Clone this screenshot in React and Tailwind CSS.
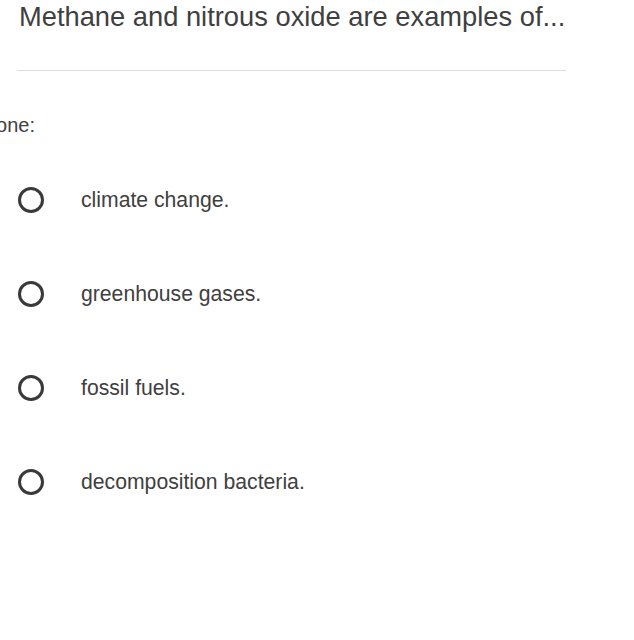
const options = [
  "climate change.",
  "greenhouse gases.",
  "fossil fuels.",
  "decomposition bacteria.",
];

const App = () => {
  return (
    <div className="min-h-screen bg-white font-['Liberation_Sans',Arial,sans-serif] text-[#404040]">
      {/*Question*/}
      <div className="pl-[19px]">
        <h1 className="text-[27.3px] leading-[34px] text-[#3f3f3f]">
          Methane and nitrous oxide are examples of...
        </h1>
      </div>

      <div className="ml-[17px] mt-[36px] w-[549px] border-t border-[#dcdcdc]" />

      {/*Prompt, cut at the left edge*/}
      <div className="mt-[42px] flex w-[35px] justify-end overflow-hidden">
        <span className="whitespace-nowrap text-[20px] leading-[24px]">
          Select one:
        </span>
      </div>

      {/*Answers*/}
      <div className="mt-[50px] flex flex-col gap-[68px]">
        {options.map((opt) => (
          <label key={opt} className="flex h-[26px] items-center">
            <span className="ml-[18px] h-[26px] w-[26px] shrink-0 rounded-full border-[3px] border-[#3a3a3a]" />
            <span className="ml-[37px] text-[21.2px] leading-[24px]">{opt}</span>
          </label>
        ))}
      </div>
    </div>
  );
};

export default App;
